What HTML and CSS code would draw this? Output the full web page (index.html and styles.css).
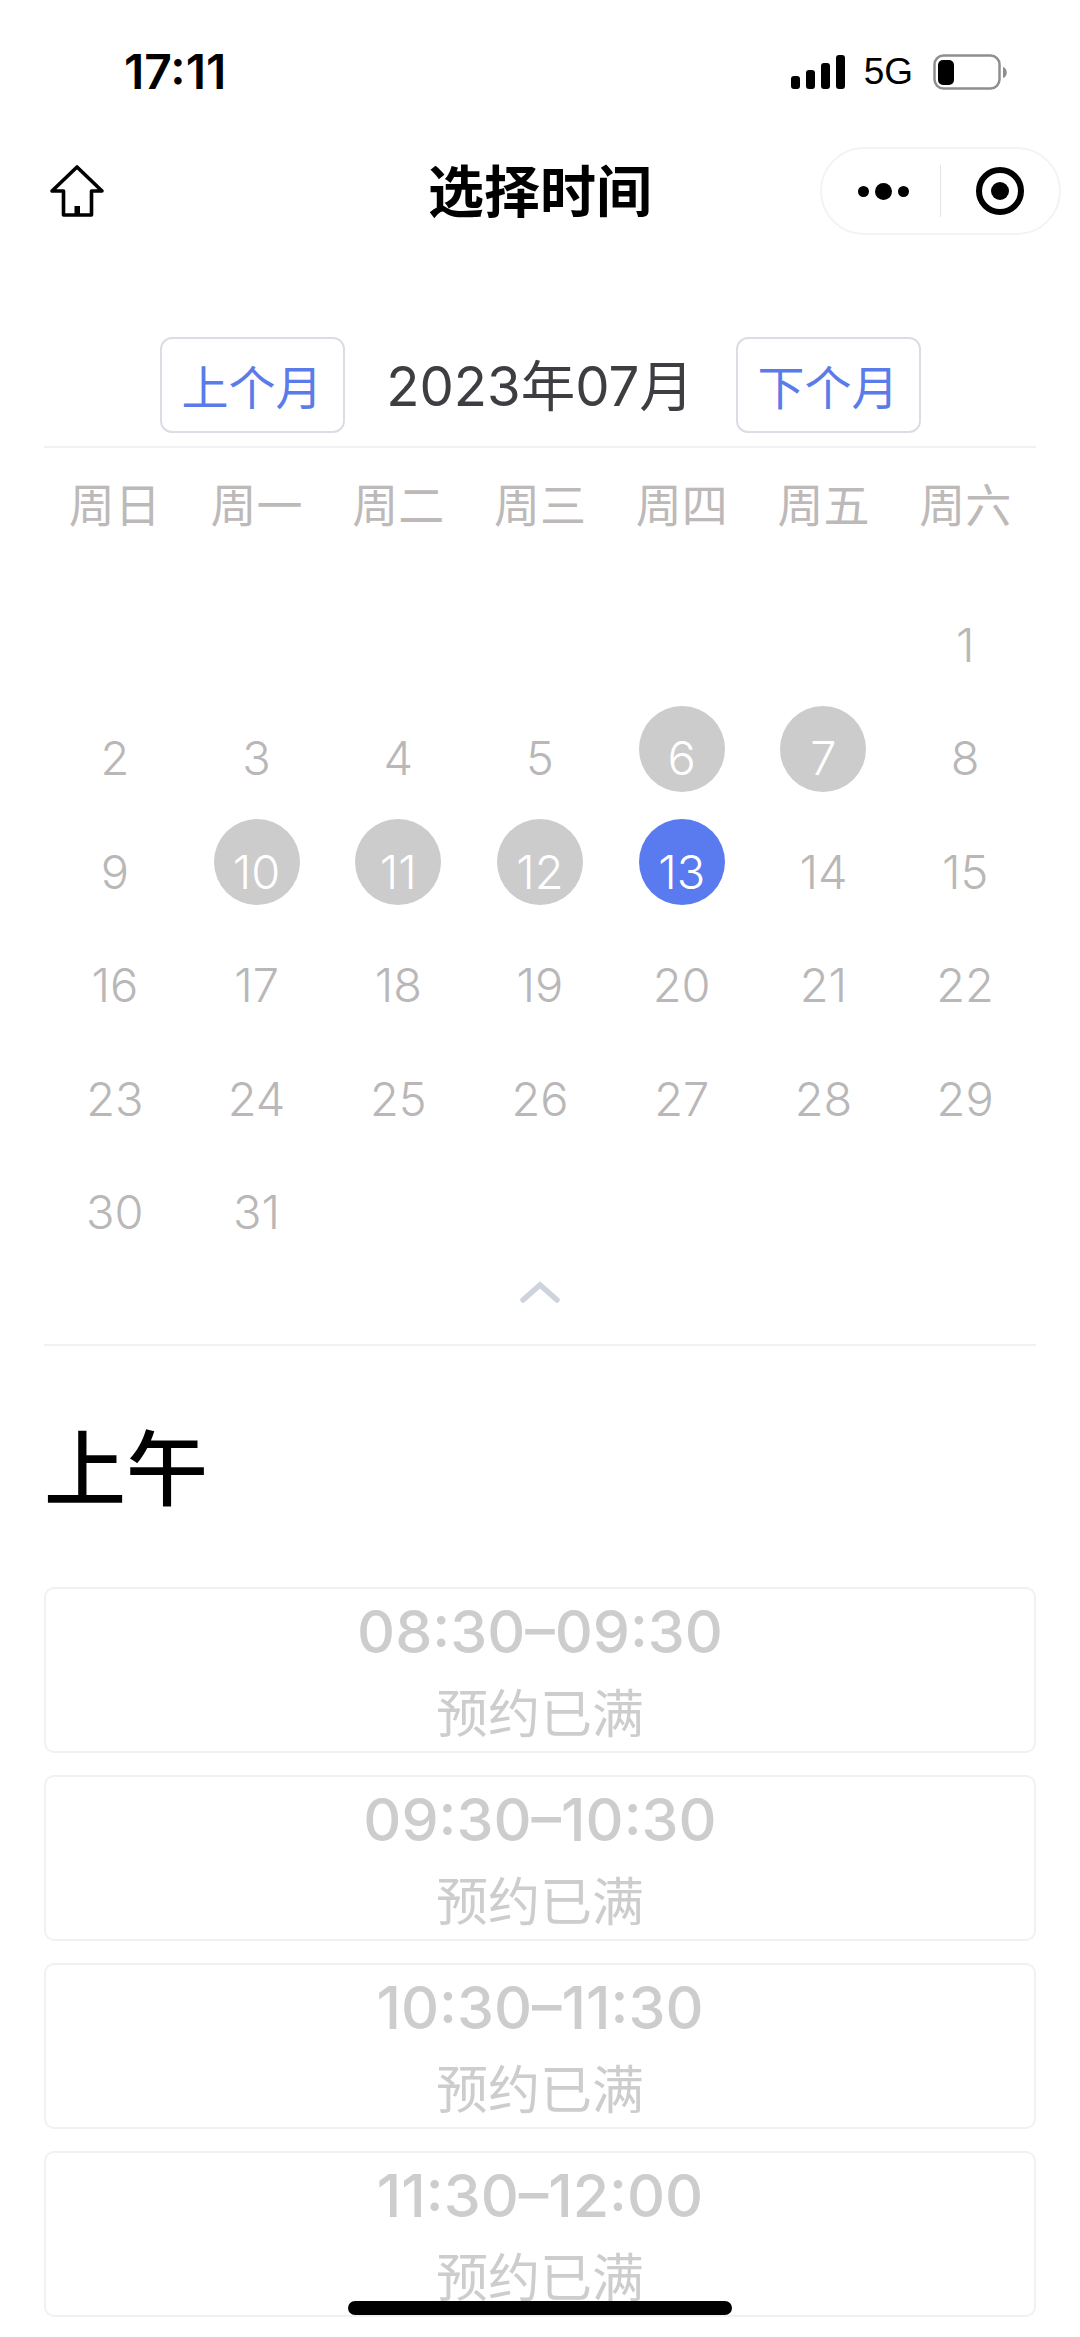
FILE: index.html
```html
<!DOCTYPE html>
<html lang="zh-CN">
  <head>
    <meta charset="UTF-8" />
    <meta name="viewport" content="width=device-width, initial-scale=1.0" />
    <title>选择时间</title>
    <link rel="stylesheet" href="styles.css">
  </head>
  <body>
    <div class="page">
      <div class="status-bar">
        <span class="clock">17:11</span>
        <div class="status-icons">
          <svg class="signal" width="54" height="36" viewBox="0 0 54 36">
            <rect x="0" y="22" width="9" height="13" rx="3" fill="#000" />
            <rect x="15" y="16" width="9" height="19" rx="3" fill="#000" />
            <rect x="30" y="9" width="9" height="26" rx="3" fill="#000" />
            <rect x="45" y="1" width="9" height="34" rx="3" fill="#000" />
          </svg>
          <span class="net">5G</span>
          <svg class="battery" width="75" height="36" viewBox="0 0 75 36">
            <rect x="1.5" y="1.5" width="65" height="33" rx="9" fill="none" stroke="#8e8e8e" stroke-width="2.5" />
            <rect x="5" y="6" width="16" height="25" rx="5" fill="#000" />
            <path d="M70 13 C75 14 75 23 70 24 Z" fill="#8e8e8e" />
          </svg>
        </div>
      </div>

      <div class="nav-bar">
        <svg class="home" width="56" height="56" viewBox="0 0 56 56">
          <path d="M28 4 L3 28 H14.5 V52 H42.5 V28 H53 Z" fill="none" stroke="#000" stroke-width="3.6" stroke-linejoin="round" />
          <rect x="25.5" y="43" width="5.5" height="9" fill="#000" />
        </svg>
        <h1 class="nav-title">选择时间</h1>
        <div class="capsule">
          <div class="capsule-dots">
            <i class="dot"></i><i class="dot big"></i><i class="dot"></i>
          </div>
          <div class="capsule-line"></div>
          <div class="capsule-target"><i></i></div>
        </div>
      </div>

      <div class="month-bar">
        <button class="month-btn">上个月</button>
        <span class="month-name">2023年07月</span>
        <button class="month-btn">下个月</button>
      </div>

      <div class="calendar">
        <div class="week">
          <span>周日</span><span>周一</span><span>周二</span><span>周三</span><span>周四</span><span>周五</span><span>周六</span>
        </div>
        <div class="days">
          <span></span><span></span><span></span><span></span><span></span><span></span><span>1</span>
          <span>2</span><span>3</span><span>4</span><span>5</span><span class="full">6</span><span class="full">7</span><span>8</span>
          <span>9</span><span class="full">10</span><span class="full">11</span><span class="full">12</span><span class="today">13</span><span>14</span><span>15</span>
          <span>16</span><span>17</span><span>18</span><span>19</span><span>20</span><span>21</span><span>22</span>
          <span>23</span><span>24</span><span>25</span><span>26</span><span>27</span><span>28</span><span>29</span>
          <span>30</span><span>31</span><span></span><span></span><span></span><span></span><span></span>
        </div>
        <div class="fold">
          <svg width="42" height="24" viewBox="0 0 42 24">
            <path d="M4 20 L21 5 L38 20" fill="none" stroke="#ced3de" stroke-width="5.5" stroke-linecap="round" />
          </svg>
        </div>
      </div>

      <h2 class="section">上午</h2>

      <div class="slots">
        <div class="slot"><div class="slot-time">08:30–09:30</div><div class="slot-note">预约已满</div></div>
        <div class="slot"><div class="slot-time">09:30–10:30</div><div class="slot-note">预约已满</div></div>
        <div class="slot"><div class="slot-time">10:30–11:30</div><div class="slot-note">预约已满</div></div>
        <div class="slot"><div class="slot-time">11:30–12:00</div><div class="slot-note">预约已满</div></div>
      </div>

      <div class="home-bar"></div>
    </div>
  </body>
</html>
```

FILE: styles.css
```css
* {
  box-sizing: border-box;
  margin: 0;
  padding: 0;
}
html,
body {
  height: 100%;
  overflow: hidden;
}
body {
  font-family: Inter, "Noto Sans CJK SC", sans-serif;
  background-color: #fff;
}
.page {
  position: relative;
  height: 2337px;
  overflow: hidden;
}

/* status bar */
.status-bar {
  height: 140px;
  padding: 48px 72px 0 124px;
  display: flex;
  justify-content: space-between;
  align-items: flex-start;
}
.clock {
  font-size: 48px;
  font-weight: 600;
  line-height: 48px;
  color: #000;
}
.status-icons {
  display: flex;
  align-items: center;
  height: 48px;
}
.net {
  font-family: "Liberation Sans", sans-serif;
  font-size: 37px;
  line-height: 48px;
  color: #000;
  margin: 0 20px 0 19px;
}

/* nav */
.nav-bar {
  position: relative;
  height: 94px;
  display: flex;
  align-items: center;
  justify-content: center;
  padding-top: 10px;
}
.home {
  position: absolute;
  left: 49px;
  top: 23px;
}
.nav-title {
  font-size: 56px;
  font-weight: 700;
  color: #000;
  line-height: 64px;
}
.capsule {
  position: absolute;
  right: 19px;
  top: 7px;
  width: 241px;
  height: 88px;
  border: 2px solid #f3f3f5;
  border-radius: 44px;
  display: flex;
  align-items: center;
}
.capsule-dots {
  width: 118px;
  display: flex;
  justify-content: center;
  align-items: center;
  gap: 6px;
  padding-left: 4px;
}
.dot {
  width: 11px;
  height: 11px;
  border-radius: 50%;
  background: #000;
}
.dot.big {
  width: 17px;
  height: 17px;
}
.capsule-line {
  width: 1px;
  height: 52px;
  background: #e4e4e6;
}
.capsule-target {
  flex: 1;
  display: flex;
  justify-content: center;
}
.capsule-target i {
  width: 48px;
  height: 48px;
  border: 6px solid #000;
  border-radius: 50%;
  display: flex;
  align-items: center;
  justify-content: center;
}
.capsule-target i::after {
  content: "";
  width: 18px;
  height: 18px;
  border-radius: 50%;
  background: #000;
}

/* month switch */
.month-bar {
  margin: 103px 44px 0;
  padding-bottom: 13px;
  border-bottom: 2px solid #f1f1f3;
  display: flex;
  justify-content: center;
  align-items: center;
}
.month-btn {
  width: 185px;
  height: 96px;
  padding-bottom: 2px;
  background: #fff;
  border: 2px solid #dcdce4;
  border-radius: 12px;
  color: #5a7bea;
  font-family: inherit;
  font-size: 47px;
}
.month-name {
  width: 391px;
  padding-bottom: 5px;
  text-align: center;
  font-size: 54.5px;
  color: #3e3e42;
}

/* calendar */
.calendar {
  margin: 0 44px;
  padding-bottom: 34px;
  border-bottom: 2px solid #f1f1f3;
}
.week,
.days {
  display: grid;
  grid-template-columns: repeat(7, 1fr);
  text-align: center;
}
.week {
  padding-top: 31px;
  height: 89px;
  font-size: 46px;
  line-height: 52px;
  color: #bdb9b9;
}
.days {
  grid-auto-rows: 113.5px;
  font-size: 47px;
  font-weight: 300;
  color: #b9b7b7;
  padding-top: 55px;
}
.days span {
  display: flex;
  align-items: center;
  justify-content: center;
  width: 86px;
  height: 86px;
  margin: 0 auto;
  padding-top: 19px;
  line-height: 54px;
  border-radius: 50%;
}
.days .full {
  background: #cccccc;
  color: #fff;
}
.days .today {
  background: #5a7bef;
  color: #fff;
}
.fold {
  display: flex;
  justify-content: center;
  height: 30px;
  margin-top: 7px;
}

/* section */
.section {
  font-size: 82px;
  font-weight: 500;
  line-height: 100px;
  color: #000;
  margin: 74px 0 0 44px;
}

/* time slots */
.slots {
  margin: 67px 44px 0;
  display: flex;
  flex-direction: column;
  gap: 22px;
}
.slot {
  height: 166px;
  border: 2px solid #f1f1f5;
  border-radius: 10px;
  text-align: center;
  color: #cdcdcd;
}
.slot-time {
  font-size: 59px;
  line-height: 84px;
  font-weight: 500;
  padding-top: 1px;
}
.slot-note {
  font-size: 52px;
  line-height: 72px;
  padding-top: 5px;
}

.home-bar {
  position: absolute;
  left: 348px;
  bottom: 22px;
  width: 384px;
  height: 14px;
  border-radius: 7px;
  background: #000;
}
```
